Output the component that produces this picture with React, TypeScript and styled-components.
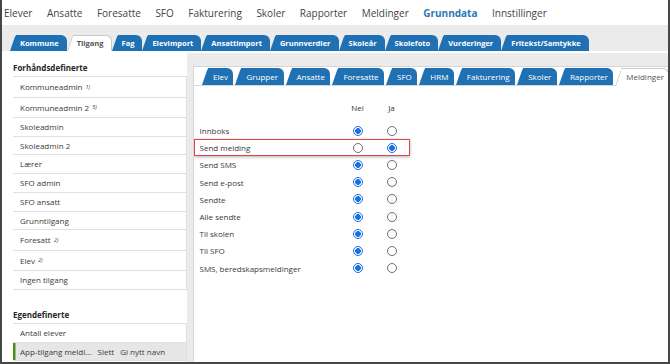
import styled, { createGlobalStyle } from "styled-components";

const GlobalStyle = createGlobalStyle`
  html, body {
    margin: 0;
    padding: 0;
    background: #fff;
  }
  body {
    font-family: "Open Sans", "Liberation Sans", sans-serif;
    color: #3a3a3a;
  }
`;

const topMenu = [
  "Elever",
  "Ansatte",
  "Foresatte",
  "SFO",
  "Fakturering",
  "Skoler",
  "Rapporter",
  "Meldinger",
  "Grunndata",
  "Innstillinger",
];

const mainTabs = [
  "Kommune",
  "Tilgang",
  "Fag",
  "Elevimport",
  "Ansattimport",
  "Grunnverdier",
  "Skoleår",
  "Skolefoto",
  "Vurderinger",
  "Fritekst/Samtykke",
];

const subTabs = [
  "Elev",
  "Grupper",
  "Ansatte",
  "Foresatte",
  "SFO",
  "HRM",
  "Fakturering",
  "Skoler",
  "Rapporter",
  "Meldinger",
];

const predefined: { name: string; note?: string }[] = [
  { name: "Kommuneadmin", note: "1)" },
  { name: "Kommuneadmin 2", note: "5)" },
  { name: "Skoleadmin" },
  { name: "Skoleadmin 2" },
  { name: "Lærer" },
  { name: "SFO admin" },
  { name: "SFO ansatt" },
  { name: "Grunntilgang" },
  { name: "Foresatt", note: "2)" },
  { name: "Elev", note: "2)" },
  { name: "Ingen tilgang" },
];

// true = Ja
const permissions: { label: string; ja: boolean }[] = [
  { label: "Innboks", ja: false },
  { label: "Send melding", ja: true },
  { label: "Send SMS", ja: false },
  { label: "Send e-post", ja: false },
  { label: "Sendte", ja: false },
  { label: "Alle sendte", ja: false },
  { label: "Til skolen", ja: false },
  { label: "Til SFO", ja: false },
  { label: "SMS, beredskapsmeldinger", ja: false },
];

export default function App() {
  return (
    <>
      <GlobalStyle />
      <Frame>
        <TopNav>
          {topMenu.map((item) => (
            <NavItem key={item} $active={item === "Grunndata"}>
              {item}
            </NavItem>
          ))}
        </TopNav>

        <MainTabBar>
          {mainTabs.map((tab) => (
            <Tab key={tab} $active={tab === "Tilgang"}>
              {tab}
            </Tab>
          ))}
        </MainTabBar>

        <Content>
          <RoleColumn>
            <GroupHeading>Forhåndsdefinerte</GroupHeading>
            {predefined.map((role) => (
              <RoleRow key={role.name} $tall={!!role.note}>
                {role.name}
                {role.note && <Note>{role.note}</Note>}
              </RoleRow>
            ))}

            <GroupHeading $spaced>Egendefinerte</GroupHeading>
            <RoleRow>Antall elever</RoleRow>
            <RoleRow $selected>
              App-tilgang meldi...
              <RowAction>Slett</RowAction>
              <RowAction>Gi nytt navn</RowAction>
            </RoleRow>
            <RoleRow>&nbsp;</RoleRow>
          </RoleColumn>

          <DetailArea>
            <DetailPanel>
              <SubTabBar>
                {subTabs.map((tab) => (
                  <Tab key={tab} $sub $active={tab === "Meldinger"}>
                    {tab}
                  </Tab>
                ))}
              </SubTabBar>

              <PermissionTable>
                <PermissionRow $header>
                  <span />
                  <ColumnLabel>Nei</ColumnLabel>
                  <ColumnLabel>Ja</ColumnLabel>
                </PermissionRow>
                {permissions.map((p) => (
                  <PermissionRow
                    key={p.label}
                    $highlight={p.label === "Send melding"}
                  >
                    <PermissionLabel>{p.label}</PermissionLabel>
                    <Radio $checked={!p.ja} />
                    <Radio $checked={p.ja} />
                  </PermissionRow>
                ))}
              </PermissionTable>
            </DetailPanel>
          </DetailArea>
        </Content>
      </Frame>
    </>
  );
}

const tabBlue = "#1f71b4";

const Frame = styled.div`
  width: 670px;
  height: 364px;
  box-sizing: border-box;
  border: 2px solid #464646;
  border-top: 0;
  display: flex;
  flex-direction: column;
  overflow: hidden;
  background: #fff;
`;

const TopNav = styled.nav`
  height: 25px;
  flex: none;
  display: flex;
  align-items: center;
  gap: 14.5px;
  padding-left: 2px;
  font-size: 10px;
`;

const NavItem = styled.span<{ $active?: boolean }>`
  color: ${(p) => (p.$active ? "#2a78b6" : "#444")};
  font-weight: ${(p) => (p.$active ? 700 : 400)};
  white-space: nowrap;
`;

const MainTabBar = styled.div`
  height: 26px;
  flex: none;
  display: flex;
  align-items: flex-end;
  padding-left: 8px;
  background: #ebebeb;
`;

const Tab = styled.div<{ $active?: boolean; $sub?: boolean }>`
  position: relative;
  z-index: 0;
  flex: none;
  height: ${(p) => (p.$sub ? (p.$active ? 18 : 17) : 16)}px;
  line-height: ${(p) => (p.$sub ? 17 : 16)}px;
  margin-bottom: ${(p) => (p.$sub && p.$active ? -1 : 0)}px;
  padding: ${(p) => (p.$sub ? "0 5.5px 0 11px" : "0 8px 0 10px")};
  font-size: ${(p) => (p.$sub ? 8 : 7.5)}px;
  font-weight: ${(p) => (p.$sub ? 400 : 700)};
  color: ${(p) => (p.$active ? "#555" : "#fff")};
  white-space: nowrap;

  &::before,
  &::after {
    content: "";
    position: absolute;
    z-index: -1;
    top: 0;
    bottom: 0;
    box-sizing: border-box;
    background: ${(p) => (p.$active ? "#fff" : tabBlue)};
    border: ${(p) => (p.$active ? "1px solid #c8c8c8" : "0")};
    border-bottom: 0;
  }

  &::before {
    left: 0;
    width: 14px;
    border-right: 0;
    border-top-left-radius: 2px;
    transform-origin: bottom left;
    transform: skewX(-19deg);
  }

  &::after {
    left: 6px;
    right: 0;
    border-left: 0;
    border-top-right-radius: 6px;
  }
`;

const Content = styled.div`
  flex: 1;
  min-height: 0;
  display: flex;
  border-top: 2px solid #fff;
  background: #ebebeb;
`;

const RoleColumn = styled.div`
  width: 185px;
  flex: none;
  box-sizing: border-box;
  padding: 6px 0 0 11px;
  background: #fff;
  font-size: 8px;
`;

const GroupHeading = styled.div<{ $spaced?: boolean }>`
  line-height: 17px;
  margin-top: ${(p) => (p.$spaced ? 16 : 0)}px;
  border-bottom: 1px solid #e0e0e0;
  font-weight: 700;
  color: #262626;
`;

const RoleRow = styled.div<{ $tall?: boolean; $selected?: boolean }>`
  display: flex;
  align-items: center;
  gap: 6px;
  line-height: ${(p) => (p.$tall ? 19.5 : 17.7)}px;
  padding-left: 7px;
  border-bottom: 1px solid #e0e0e0;
  border-right: 1px solid #e0e0e0;
  background: ${(p) => (p.$selected ? "#e6e6e6" : "#fff")};
  box-shadow: ${(p) => (p.$selected ? "inset 2.5px 0 0 #4f8a1f" : "none")};
  white-space: nowrap;
`;

const Note = styled.sup`
  margin-left: -3px;
  font-size: 5.5px;
  font-style: italic;
  line-height: 0;
  vertical-align: 4px;
`;

const RowAction = styled.span`
  color: #3a3a3a;
`;

const DetailArea = styled.div`
  flex: 1;
  min-width: 0;
  padding: 13px 0 0 6px;
`;

const DetailPanel = styled.section`
  height: 100%;
  box-sizing: border-box;
  background: #fff;
  border-left: 1px solid #d6d6d6;
  border-top: 1px solid #d6d6d6;
  overflow: hidden;
`;

const SubTabBar = styled.div`
  display: flex;
  align-items: flex-end;
  gap: 2px;
  padding: 1px 0 0 8px;
  border-bottom: 1px solid #d8d8d8;
`;

const PermissionTable = styled.div`
  display: flex;
  flex-direction: column;
  align-items: flex-start;
  margin-top: 13px;
  font-size: 8px;
`;

const PermissionRow = styled.div<{ $header?: boolean; $highlight?: boolean }>`
  display: grid;
  grid-template-columns: 141px 34px 34px;
  align-items: center;
  justify-items: center;
  height: 17.2px;
  box-sizing: border-box;
  padding-left: 4.5px;
  margin-bottom: ${(p) => (p.$header ? 5.8 : 0)}px;
  border: 1.5px solid ${(p) => (p.$highlight ? "#e24448" : "transparent")};
  box-shadow: ${(p) =>
    p.$highlight ? "0 1px 3px rgba(0, 0, 0, 0.3)" : "none"};
`;

const ColumnLabel = styled.span`
  color: #333;
`;

const PermissionLabel = styled.span`
  justify-self: start;
  color: #3a3a3a;
  white-space: nowrap;
`;

const Radio = styled.span<{ $checked?: boolean }>`
  width: 10px;
  height: 10px;
  box-sizing: border-box;
  border-radius: 50%;
  border: 1px solid ${(p) => (p.$checked ? "#1a6fe6" : "#6e6e6e")};
  background: ${(p) =>
    p.$checked
      ? "radial-gradient(circle, #1a6fe6 0 2.6px, #fff 3.1px)"
      : "#fff"};
`;
